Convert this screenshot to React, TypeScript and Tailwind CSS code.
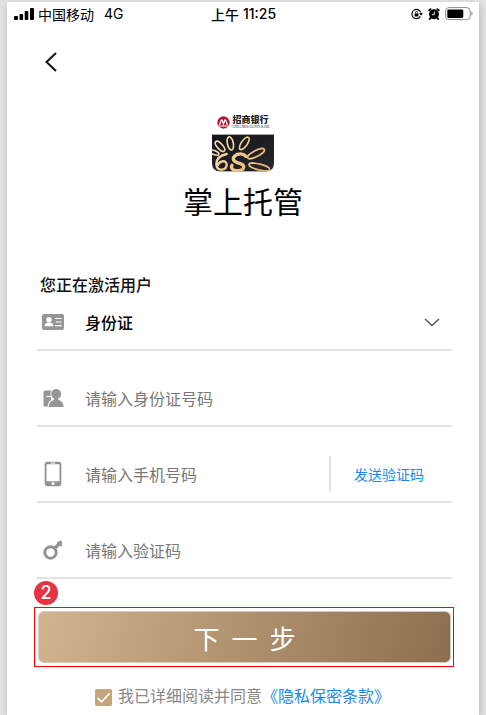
import type { ReactNode } from "react";

const SignalIcon = () => (
  <svg width="20" height="12" viewBox="0 0 20 12" fill="#000">
    <rect x="0" y="8" width="4" height="4" rx="1" />
    <rect x="5.5" y="6" width="3.6" height="6" rx="1" />
    <rect x="10.7" y="3" width="3.6" height="9" rx="1" />
    <rect x="16" y="0" width="4" height="12" rx="1" />
  </svg>
);

const RotationLockIcon = () => (
  <svg width="12" height="12" viewBox="0 0 13 12" fill="none" stroke="#000">
    <path d="M10.2 8.600A5 5 0 1 1 10.600 4.200" strokeWidth="1.200" />
    <path d="M8.900 4.900h4L10.900 8z" fill="#000" stroke="none" />
    <rect x="3.900" y="5.400" width="4.200" height="3.200" rx=".4" fill="#000" stroke="none" />
    <path d="M4.800 5.600V4.500a1.200 1.200 0 0 1 2.400 0v1.100" strokeWidth=".9" />
  </svg>
);

const AlarmIcon = () => (
  <svg width="12" height="12" viewBox="0 0 12 12">
    <circle cx="6" cy="6.200" r="5" fill="#000" />
    <path
      d="M1.300 2.300 2.500 1.200M10.700 2.300 9.500 1.200M2.600 10l-.8 1M9.400 10l.8 1"
      stroke="#000"
      strokeWidth="2"
      strokeLinecap="round"
    />
    <path d="M6.300 3.500v3.200H3.900" fill="none" stroke="#fff" strokeWidth=".9" />
  </svg>
);

const BatteryIcon = () => (
  <svg width="28" height="14" viewBox="0 0 28 14">
    <rect x=".6" y=".6" width="24.600" height="12" rx="3.400" fill="#fff" stroke="#8c8c8c" />
    <rect x="2.300" y="2.400" width="16" height="8.600" rx="1.400" fill="#000" />
    <path d="M26.400 4.600c1.600.6 1.600 3.600 0 4.200z" fill="#8c8c8c" />
  </svg>
);

const BankLogo = () => (
  <svg width="13" height="13" viewBox="0 0 38 38">
    <circle cx="19" cy="19" r="18" fill="#b5152b" />
    <path
      d="M7 26 13 12q1-2 2 0l4 11 4-11q1-2 2 0l6 14"
      fill="none"
      stroke="#fff"
      strokeWidth="3.600"
    />
    <path d="M5 29h28M19 22v7" stroke="#fff" strokeWidth="3" />
  </svg>
);

const BrandCard = () => (
  <svg width="62" height="38" viewBox="0 0 186 112">
    <defs>
      <linearGradient id="gold" gradientUnits="userSpaceOnUse" x1="0" y1="0" x2="186" y2="112">
        <stop offset="0" stopColor="#f9e3b4" />
        <stop offset="1" stopColor="#e0a862" />
      </linearGradient>
      <linearGradient id="night" x1="0" y1="0" x2="1" y2="1">
        <stop offset="0" stopColor="#14161a" />
        <stop offset="1" stopColor="#25272c" />
      </linearGradient>
      <clipPath id="card">
        <path d="M0 0h186v86q0 26-26 26H26Q0 112 0 86z" />
      </clipPath>
    </defs>
    <g clipPath="url(#card)">
      <rect width="186" height="112" fill="url(#night)" />
      <g fill="none" stroke="url(#gold)" strokeWidth="5">
        <ellipse cx="7" cy="55" rx="14" ry="6" transform="rotate(20 7 55)" />
        <ellipse cx="24" cy="36" rx="19" ry="8" transform="rotate(48 24 36)" />
        <ellipse cx="55" cy="27" rx="20" ry="9" transform="rotate(78 55 27)" />
        <ellipse cx="97" cy="27" rx="22" ry="9" transform="rotate(-55 97 27)" />
        <ellipse cx="132" cy="58" rx="28" ry="9" transform="rotate(-27 132 58)" />
        <ellipse cx="142" cy="98" rx="32" ry="9" transform="rotate(14 142 98)" />
      </g>
      <path
        d="M44 59Q15 65 13 88q0 18 16 18 15-2 15-15-1-12-13-10-10 2-15 13"
        fill="none"
        stroke="url(#gold)"
        strokeWidth="7"
        strokeLinecap="round"
      />
      <path
        d="M102 66Q92 55 76 60q-18 9-9 20 6 5 18 8 15 5 8 16-11 9-28 3-10-6-5-14"
        fill="none"
        stroke="url(#gold)"
        strokeWidth="10"
        strokeLinecap="round"
      />
    </g>
  </svg>
);

const IdCardIcon = () => (
  <svg width="22" height="16" viewBox="0 0 22 16">
    <rect width="22" height="16" rx="2" fill="#969696" />
    <circle cx="7" cy="5.800" r="2.700" fill="#fff" />
    <path d="M2.500 12.200q.2-2.800 3.400-3.600h2.200q3.200.8 3.400 3.600z" fill="#fff" />
    <path d="M13 4.500h6.500M14 8h5.500M13 11.600h6.500" stroke="#fff" strokeWidth="1.200" />
  </svg>
);

const PersonIcon = () => (
  <svg width="22" height="20" viewBox="0 0 22 20">
    <path d="M3 2.500h6v16H3q-1.500 0-1.500-1.500V4Q1.500 2.500 3 2.500z" fill="#969696" />
    <path d="M4.500 8.500H9" stroke="#fff" strokeWidth="1.200" />
    <path
      d="M6.500 19q.4-5.900 5.700-7.300h4q5.100 1.400 5.500 7.300z"
      fill="#969696"
      stroke="#fff"
      strokeWidth="2"
      paintOrder="stroke"
    />
    <circle cx="14.200" cy="6" r="5" fill="#969696" stroke="#fff" strokeWidth="1.600" paintOrder="stroke" />
    <path d="M12.200 10h4v3h-4z" fill="#969696" />
  </svg>
);

const PhoneIcon = () => (
  <svg width="18" height="26" viewBox="0 0 18 26">
    <rect x="1.600" y="1.600" width="14.800" height="22.800" rx="1.800" fill="#fff" stroke="#919191" strokeWidth="1.800" />
    <path d="M1.500 20.300h15v3.200q0 1-1 1h-13q-1 0-1-1z" fill="#919191" />
    <path d="M1.500 2.400h15" stroke="#919191" strokeWidth="1.600" />
    <path d="M7 2.100h4" stroke="#fff" strokeWidth="1" />
    <circle cx="9" cy="22.400" r="1.500" fill="#fff" />
  </svg>
);

const KeyIcon = () => (
  <svg width="20" height="20" viewBox="0 0 20 20" fill="none" stroke="#929292">
    <circle cx="7.500" cy="12.500" r="5.700" strokeWidth="3" />
    <path d="m11.500 8.500 7-7" strokeWidth="3.200" />
    <path d="m14.500 2 1.800 1.800M17 4.300l2 1.800" strokeWidth="2" />
  </svg>
);

type FieldProps = {
  id: string;
  label: string;
  icon: ReactNode;
  children: ReactNode;
};

const Field = ({ id, label, icon, children }: FieldProps) => (
  <div className="flex h-19 items-center gap-5 border-b-2 border-[#e2e2e2] pt-5">
    <label htmlFor={id} aria-label={label} className="ml-1 flex w-6 justify-center">
      {icon}
    </label>
    {children}
  </div>
);

const inputClass =
  "min-w-0 flex-1 bg-transparent text-base text-[#6f6f6f] placeholder:text-[#777] outline-none";

const StatusBar = () => (
  <div className="flex h-6 items-center justify-between pr-1.5 pl-[7px] text-sm text-black">
    <div className="flex flex-1 items-center gap-1">
      <SignalIcon />
      <span>中国移动</span>
      <span className="ml-1.5 font-['Inter']">4G</span>
    </div>
    <div className="flex items-center gap-1 font-medium">
      <span>上午</span>
      <span className="font-['Inter']">11:25</span>
    </div>
    <div className="flex flex-1 items-center justify-end gap-[5px]">
      <RotationLockIcon />
      <AlarmIcon />
      <BatteryIcon />
    </div>
  </div>
);

const Brand = () => (
  <div className="flex flex-col items-center">
    <div className="flex h-4 items-center gap-0.5">
      <BankLogo />
      <div className="flex flex-col items-center">
        <span className="text-[9px] leading-[10px] font-black text-[#222]">招商银行</span>
        <span className="font-['Liberation_Serif'] text-[3px] leading-[4px] text-[#222]">
          CHINA MERCHANTS BANK
        </span>
      </div>
    </div>
    <div className="mt-1">
      <BrandCard />
    </div>
    <h1 className="mt-2 text-[30px] leading-10 font-normal text-black">掌上托管</h1>
  </div>
);

export default function App() {
  return (
    <div className="min-h-screen bg-[#e2e2e2] px-[7px] pt-0.5 font-['Noto_Sans_CJK_SC',sans-serif]">
      <main className="min-h-[calc(100vh-2px)] bg-white shadow-[1px_3px_7px_rgba(0,0,0,0.2)]">
        <StatusBar />
        <header className="flex h-[88px] items-start px-8 pt-5">
          <button type="button" aria-label="返回" className="flex h-8 w-6 items-center justify-center">
            <svg width="14" height="22" viewBox="0 0 14 22" fill="none" stroke="#111" strokeWidth="2">
              <path d="m12 2-9.500 9 9.500 9" />
            </svg>
          </button>
        </header>
        <Brand />

        <form className="mt-13 pr-[27px] pl-[30px]" onSubmit={(e) => e.preventDefault()}>
          <h2 className="ml-[3px] text-base leading-6 font-medium text-[#111]">您正在激活用户</h2>
          <div className="-mt-[21px]">
            <Field id="idType" label="证件类型" icon={<IdCardIcon />}>
              <div className="relative flex flex-1 items-center">
                <select
                  id="idType"
                  className="w-full appearance-none bg-transparent text-base font-medium text-black outline-none"
                >
                  <option>身份证</option>
                </select>
                <svg
                  className="pointer-events-none absolute right-3"
                  width="16"
                  height="9"
                  viewBox="0 0 16 9"
                  fill="none"
                  stroke="#555"
                  strokeWidth="1.500"
                >
                  <path d="m1 1 7 6.500L15 1" />
                </svg>
              </div>
            </Field>
          </div>
          <Field id="idNumber" label="身份证号码" icon={<PersonIcon />}>
            <input id="idNumber" className={inputClass} placeholder="请输入身份证号码" />
          </Field>
          <Field id="phone" label="手机号码" icon={<PhoneIcon />}>
            <input id="phone" type="tel" className={inputClass} placeholder="请输入手机号码" />
            <div className="-ml-5 flex h-9 w-[123px] items-center border-l-2 border-[#e2e2e2] pl-[23px]">
              <button type="button" className="text-sm text-[#1b87ee]">
                发送验证码
              </button>
            </div>
          </Field>
          <Field id="code" label="验证码" icon={<KeyIcon />}>
            <input id="code" className={inputClass} placeholder="请输入验证码" />
          </Field>

          <div className="relative -mr-0.5 -ml-[3px] mt-7 border border-[#f00] py-[3px] pr-0.5 pl-[3px]">
            <span className="absolute -top-[27px] -left-px flex size-6 items-center justify-center rounded-full bg-[#e63241] font-['Inter'] text-lg font-medium text-white">
              2
            </span>
            <button
              type="submit"
              className="flex h-13 w-full items-center justify-center gap-3 rounded-md border border-[#d0cbc6] bg-linear-105 from-[#d2b48f] to-[#8c6f4e] text-[26px] text-white"
            >
              <span>下</span>
              <span>一</span>
              <span>步</span>
            </button>
          </div>

          <div className="mt-4 flex items-center justify-center pr-1 text-base leading-6">
            <label className="flex items-center gap-1.5 text-[#888]">
              <span className="relative mt-1 flex size-[17px]">
                <input
                  type="checkbox"
                  defaultChecked
                  className="size-full appearance-none rounded-xs bg-[#c4a47b]"
                />
                <svg
                  className="pointer-events-none absolute inset-0"
                  width="17"
                  height="17"
                  viewBox="0 0 17 17"
                  fill="none"
                  stroke="#fff"
                  strokeWidth="1.800"
                >
                  <path d="m2.500 8.800 4 4 8-8.300" />
                </svg>
              </span>
              我已详细阅读并同意
            </label>
            <a href="#privacy" className="text-[#1b87ee]">
              《隐私保密条款》
            </a>
          </div>
        </form>
      </main>
    </div>
  );
}
